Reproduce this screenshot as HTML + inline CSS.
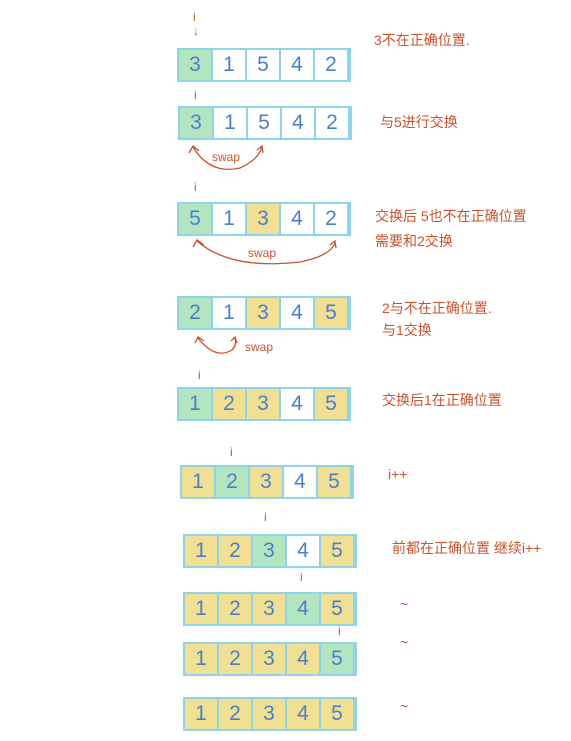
<!DOCTYPE html><html><head><meta charset="utf-8"><style>
body{margin:0;width:571px;height:741px;background:#fff;position:relative;overflow:hidden;font-family:"Liberation Sans","Noto Sans CJK SC",sans-serif}
.r{position:absolute;display:flex;border:2px solid #8fd4ea;height:30px}
.r div{width:32px;height:30px;border-right:2px solid #8fd4ea;text-align:center;line-height:30px;font-size:21px;color:#4a7fc9;font-family:"Liberation Sans",sans-serif}
.g{background:#b3e5c1}.y{background:#f1df94}
.t{position:absolute;color:#c9532e;font-size:14px;white-space:nowrap}
.i{position:absolute;color:#c9532e;font-size:12px}
</style></head><body>
<div class="i" style="left:193px;top:10px">i<br>↓</div>
<div class="r" style="left:177px;top:48px"><div class="g">3</div><div>1</div><div>5</div><div>4</div><div>2</div></div>
<div class="t" style="left:374px;top:30px">3不在正确位置.</div>
<div class="i" style="left:194px;top:88px">i</div>
<div class="r" style="left:178px;top:106px"><div class="g">3</div><div>1</div><div>5</div><div>4</div><div>2</div></div>
<div class="t" style="left:380px;top:112px">与5进行交换</div>
<div class="i" style="left:194px;top:180px">i</div>
<div class="r" style="left:177px;top:202px"><div class="g">5</div><div>1</div><div class="y">3</div><div>4</div><div>2</div></div>
<div class="t" style="left:375px;top:206px">交换后 5也不在正确位置</div>
<div class="t" style="left:375px;top:231px">需要和2交换</div>
<div class="r" style="left:177px;top:296px"><div class="g">2</div><div>1</div><div class="y">3</div><div>4</div><div class="y">5</div></div>
<div class="t" style="left:382px;top:298px">2与不在正确位置.</div>
<div class="t" style="left:382px;top:320px">与1交换</div>
<div class="i" style="left:198px;top:368px">i</div>
<div class="r" style="left:177px;top:387px"><div class="g">1</div><div class="y">2</div><div class="y">3</div><div>4</div><div class="y">5</div></div>
<div class="t" style="left:382px;top:390px">交换后1在正确位置</div>
<div class="i" style="left:230px;top:445px">i</div>
<div class="r" style="left:180px;top:465px"><div class="y">1</div><div class="g">2</div><div class="y">3</div><div>4</div><div class="y">5</div></div>
<div class="t" style="left:388px;top:466px">i++</div>
<div class="i" style="left:264px;top:510px">i</div>
<div class="r" style="left:183px;top:534px"><div class="y">1</div><div class="y">2</div><div class="g">3</div><div>4</div><div class="y">5</div></div>
<div class="t" style="left:392px;top:538px">前都在正确位置 继续i++</div>
<div class="i" style="left:300px;top:570px">i</div>
<div class="r" style="left:183px;top:592px"><div class="y">1</div><div class="y">2</div><div class="y">3</div><div class="g">4</div><div class="y">5</div></div>
<div class="t" style="left:400px;top:596px">~</div>
<div class="i" style="left:338px;top:624px">i</div>
<div class="r" style="left:183px;top:642px"><div class="y">1</div><div class="y">2</div><div class="y">3</div><div class="y">4</div><div class="g">5</div></div>
<div class="t" style="left:400px;top:634px">~</div>
<div class="r" style="left:183px;top:697px"><div class="y">1</div><div class="y">2</div><div class="y">3</div><div class="y">4</div><div class="y">5</div></div>
<div class="t" style="left:400px;top:698px">~</div>
<svg style="position:absolute;left:0;top:0" width="571" height="741" fill="none" stroke="#c9532e" stroke-width="1.3">
<path d="M193 147 Q210 175 240 168 Q258 160 262 147"/><path d="M189 153 L193 146 L199 151"/><path d="M257 150 L262 146 L263 153"/>
<path d="M197 241 Q230 270 300 262 Q330 256 335 243"/><path d="M193 247 L197 240 L204 245"/><path d="M330 245 L335 241 L336 248"/>
<path d="M198 338 Q215 360 232 350 Q237 345 235 338"/><path d="M195 343 L198 337 L204 341"/><path d="M231 341 L235 337 L237 343"/>
</svg>
<div class="i" style="left:212px;top:150px">swap</div>
<div class="i" style="left:248px;top:246px">swap</div>
<div class="i" style="left:245px;top:340px">swap</div>
</body></html>
